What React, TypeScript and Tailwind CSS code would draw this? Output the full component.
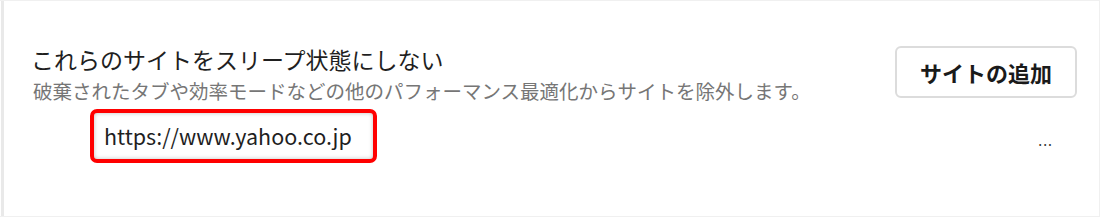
import React from 'react';

const JP = "font-['Noto_Sans_CJK_JP','Noto_Sans',sans-serif]";

export default function App() {
  return (
    <div className={`h-[218px] w-[1100px] overflow-hidden bg-white ${JP}`}>
      <div className="flex h-[217px] border-t border-b border-r border-[#f0f0f0]">
        <div className="ml-[1px] w-[3px] bg-[#e9e9e9]" />
        <div className="flex flex-1 flex-col pl-[27px] pr-[22px] pt-[43px]">
          <div className="flex items-start justify-between">
            <div>
              <div className="text-[23px] leading-[31px] text-[#1f1f1f]">これらのサイトをスリープ状態にしない</div>
              <div className="mt-[2px] pl-[2px] text-[19.5px] leading-[27px] text-[#767676]">
                破棄されたタブや効率モードなどの他のパフォーマンス最適化からサイトを除外します。
              </div>
            </div>
            <button className="mt-[2px] flex h-[52px] w-[182px] items-center justify-center rounded-[6px] border-2 border-[#dcdcdc] bg-white text-[22px] font-bold text-[#1a1a1a]">
              サイトの追加
            </button>
          </div>
          <div className="mt-[5px] flex items-center justify-between">
            <div className="ml-[59px] flex h-[54px] w-[287px] items-center rounded-[7px] border-[4px] border-[#ff0000] pl-[10px] shadow-[inset_0_0_4px_rgba(0,0,0,0.25)]">
              <span className="text-[21.5px] text-[#1f1f1f]">https://www.yahoo.co.jp</span>
            </div>
            <span className="mr-[24px] mt-[8px] text-[14px] leading-none tracking-[1px] text-[#333]">...</span>
          </div>
        </div>
      </div>
    </div>
  );
}
